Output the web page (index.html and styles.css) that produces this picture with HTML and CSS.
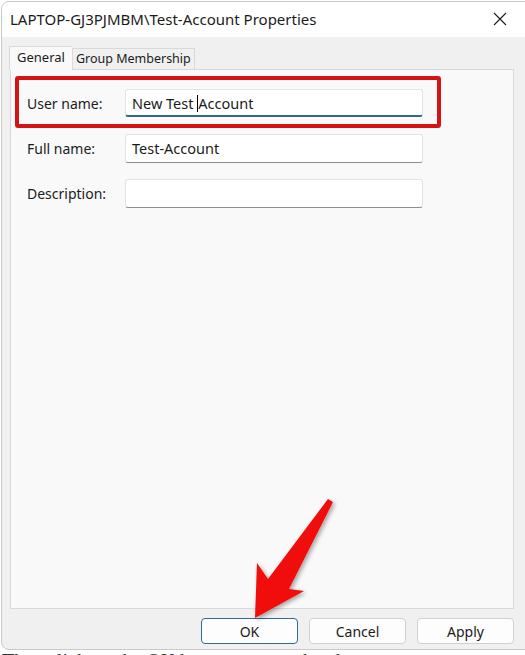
FILE: index.html
```html
<!DOCTYPE html>
<html lang="en">
<head>
    <meta charset="UTF-8">
    <meta name="viewport" content="width=device-width, initial-scale=1.0">
    <title>Test-Account Properties</title>
    <link rel="stylesheet" href="styles.css">
</head>
<body>
    <div class="window">
        <div class="titlebar">
            <span class="title">LAPTOP-GJ3PJMBM\Test-Account Properties</span>
            <svg class="close" width="14" height="14" viewBox="0 0 14 14">
                <path d="M1 1 L13 13 M13 1 L1 13" stroke="#1b1b1b" stroke-width="1.1" fill="none"/>
            </svg>
        </div>
        <div class="tabs">
            <div class="tab active">General</div>
            <div class="tab">Group Membership</div>
        </div>
        <div class="panel">
            <div class="highlight">
                <div class="row">
                    <span class="label">User name:</span>
                    <div class="field focused">New Test <span class="caret"></span>Account</div>
                </div>
            </div>
            <div class="row plain">
                <span class="label">Full name:</span>
                <div class="field">Test-Account</div>
            </div>
            <div class="row plain">
                <span class="label">Description:</span>
                <div class="field"></div>
            </div>
        </div>
        <div class="buttons">
            <button class="btn default">OK</button>
            <button class="btn">Cancel</button>
            <button class="btn">Apply</button>
        </div>
    </div>
    <p class="behind">Then click on the OK button to save the changes</p>

    <svg class="arrow" width="525" height="655" viewBox="0 0 525 655">
        <defs>
            <filter id="shadow" x="-20%" y="-20%" width="140%" height="140%">
                <feDropShadow dx="2" dy="2" stdDeviation="2" flood-color="#000" flood-opacity="0.35"/>
            </filter>
        </defs>
        <polygon points="328,499 333,502 289,589 304,591 255,618 257,563 268,579" fill="#f20a0a" filter="url(#shadow)"/>
    </svg>
</body>
</html>
```

FILE: styles.css
```css
body {
    margin: 0;
    overflow: hidden;
    background: #ffffff;
    font-family: "Noto Sans", "Open Sans", sans-serif;
    color: #1b1b1b;
    height: 655px;
    position: relative;
}
.window {
    margin: 1px 0 0 1px;
    width: 540px;
    height: 649px;
    box-sizing: border-box;
    border: 1px solid #c9c9c9;
    border-radius: 8px;
    background: #f0f0f0;
    overflow: hidden;
    display: flex;
    flex-direction: column;
}
.titlebar {
    height: 35px;
    background: #ffffff;
    display: flex;
    align-items: center;
    justify-content: space-between;
    padding: 0 33px 0 8px;
}
.title {
    font-size: 15px;
    margin-top: -2px;
}
.close {
    margin-top: -2px;
}
.tabs {
    display: flex;
    align-items: flex-end;
    margin: 9px 0 0 7px;
    height: 23px;
    position: relative;
    z-index: 1;
}
.tab {
    font-size: 12.5px;
    height: 21px;
    line-height: 20px;
    padding: 0 3px;
    box-sizing: border-box;
    border: 1px solid #d9d9d9;
    border-bottom: none;
    background: #f0f0f0;
}
.tab.active {
    height: 24px;
    line-height: 21px;
    padding: 0 7px;
    font-size: 13px;
    background: #f9f9f9;
    margin-bottom: -1px;
    border-right: none;
}
.panel {
    margin-left: 8px;
    width: 504px;
    height: 540px;
    box-sizing: border-box;
    border: 1px solid #d9d9d9;
    background: #f9f9f9;
    padding: 6px 0 0 4px;
}
.highlight {
    width: 426px;
    height: 52px;
    box-sizing: border-box;
    border: 4px solid #d41414;
    border-radius: 3px;
    padding: 9px 0 0 8px;
    margin-bottom: 6px;
}
.row {
    display: flex;
    align-items: center;
}
.row.plain {
    padding-left: 12px;
    margin-bottom: 16px;
}
.label {
    width: 98px;
    font-size: 14px;
}
.field {
    width: 298px;
    height: 29px;
    box-sizing: border-box;
    background: #ffffff;
    border: 1px solid #e3e3e3;
    border-bottom: 1px solid #8d8d8d;
    border-radius: 3px;
    font-size: 14.5px;
    line-height: 26px;
    padding-left: 6px;
}
.field.focused {
    height: 28px;
    border-bottom: 2px solid #2c6c84;
}
.caret {
    display: inline-block;
    width: 1px;
    height: 17px;
    background: #000;
    vertical-align: -3px;
}
.buttons {
    display: flex;
    justify-content: flex-end;
    gap: 11px;
    width: 504px;
    margin: 9px 0 0 8px;
}
.btn {
    width: 97px;
    height: 26px;
    box-sizing: border-box;
    border: 1px solid #d0d0d0;
    border-radius: 4px;
    background: #fdfdfd;
    font-family: "Noto Sans", "Open Sans", sans-serif;
    font-size: 14px;
    color: #1b1b1b;
    padding: 0;
}
.btn.default {
    border-color: #2f6b95;
}
.behind {
    margin: 0;
    padding-left: 2px;
    font-family: "Liberation Serif", serif;
    font-size: 20px;
    line-height: 22px;
    color: #333;
}
.arrow {
    position: absolute;
    top: 0;
    left: 0;
}
```
